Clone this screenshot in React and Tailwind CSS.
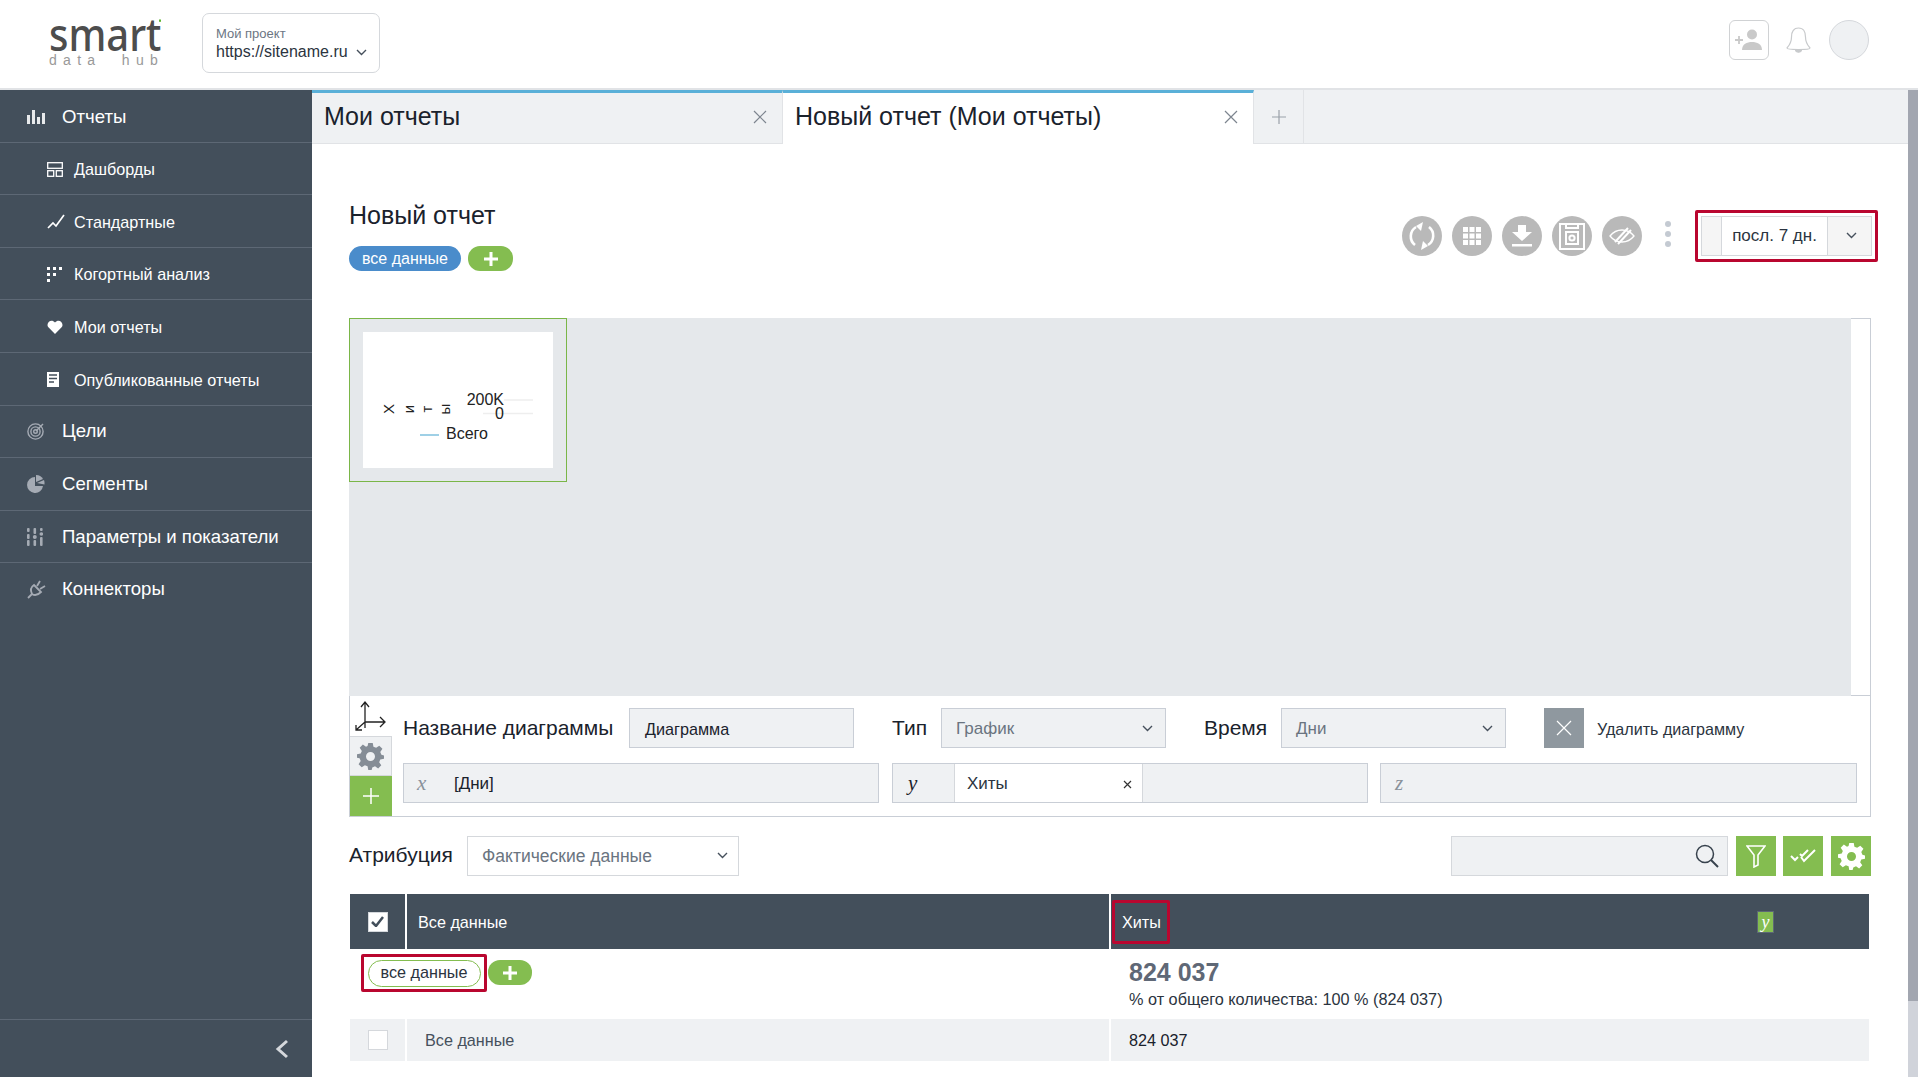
import React from "react";

const Chev = ({ className = "", color = "#46505c", w = 11 }) => (
  <svg width={w} height={w * 0.64} viewBox="0 0 11 7" className={className} fill="none" stroke={color} strokeWidth="1.4"><path d="M1 1l4.5 4.5L10 1" /></svg>
);

const I = {
  bars: <svg width="18" height="14" viewBox="0 0 18 14" fill="#e8eaec"><rect x="0" y="5" width="3" height="9"/><rect x="5" y="0" width="3" height="14"/><rect x="10" y="7" width="3" height="7"/><rect x="15" y="3" width="3" height="11"/></svg>,
  dash: <svg width="16" height="15" viewBox="0 0 16 15" fill="none" stroke="#fff" strokeWidth="1.3"><rect x=".7" y=".7" width="14.6" height="5.6"/><rect x=".7" y="8.7" width="6" height="5.6"/><rect x="9.3" y="8.7" width="6" height="5.6"/></svg>,
  line: <svg width="18" height="15" viewBox="0 0 18 15" fill="none" stroke="#fff" strokeWidth="1.7"><path d="M1 14l5-5 3 3 8-11"/></svg>,
  cohort: <svg width="15" height="15" viewBox="0 0 15 15" fill="#fff"><rect x="0" y="0" width="3" height="3"/><rect x="6" y="0" width="3" height="3"/><rect x="12" y="0" width="3" height="3"/><rect x="0" y="6" width="3" height="3"/><rect x="6" y="6" width="3" height="3"/><rect x="0" y="12" width="3" height="3"/></svg>,
  heart: <svg width="16" height="14" viewBox="0 0 16 14" fill="#fff"><path d="M8 14L1.4 7.3C-1.7 3.8 3.8-2.4 8 2.4 12.2-2.4 17.7 3.8 14.6 7.3z"/></svg>,
  doc: <svg width="12" height="15" viewBox="0 0 12 15"><rect width="12" height="15" fill="#fff"/><path d="M2 3h8M2 6.5h8M2 10h5" stroke="#434f5b" strokeWidth="1.5"/></svg>,
  target: <svg width="18" height="18" viewBox="0 0 18 18" fill="none" stroke="#a5abb4" strokeWidth="1.4"><circle cx="8.5" cy="9.5" r="7.6"/><circle cx="8.5" cy="9.5" r="4.6"/><circle cx="8.5" cy="9.5" r="1.8"/><path d="M9 9l7-7"/></svg>,
  pie: <svg width="18" height="18" viewBox="0 0 18 18" fill="#a5abb4"><path d="M8 2a8 8 0 1 0 8 9H8z"/><path d="M9 0a8 8 0 0 1 7 4L9 7z"/><path d="M10 8l7-3a8 8 0 0 1 .5 4.5z"/></svg>,
  sliders: <svg width="16" height="18" viewBox="0 0 16 18" fill="#a5abb4"><rect x="0" y="0" width="2.6" height="4" rx="1"/><rect x="0" y="6" width="2.6" height="5" rx="1"/><rect x="0" y="12" width="2.6" height="6" rx="1"/><rect x="6.5" y="0" width="2.6" height="6" rx="1"/><circle cx="7.8" cy="9" r="2"/><rect x="6.5" y="12" width="2.6" height="6" rx="1"/><rect x="13" y="0" width="2.6" height="3" rx="1"/><circle cx="14.3" cy="6" r="1.8"/><rect x="13" y="9" width="2.6" height="9" rx="1"/></svg>,
  plug: <svg width="20" height="20" viewBox="0 0 20 20" fill="none" stroke="#a5abb4" strokeWidth="1.8"><path d="M1 19l4-4"/><path d="M5 15C3 11 4 8 7 6l7 7c-3 3-6 4-9 2z"/><path d="M10 7l3-5M13 10l5-3"/></svg>,
};

const NavItem = ({ icon, text, sub, low }) => (
  <div className={"flex h-[52.6px] shrink-0 items-center border-b border-[#5d6875] text-white " + (low ? "pt-0 " : "pt-[2px] ") + (sub ? "text-[16.2px]" : "text-[18.6px]")}>
    <div className={sub ? "ml-[47px] flex w-[27px] items-center" : "ml-[27px] flex w-[35px] items-center"}>{icon}</div>
    <span>{text}</span>
  </div>
);

const Sidebar = () => (
  <aside className="flex h-full w-[312px] shrink-0 flex-col bg-[#434f5b]">
    <NavItem icon={I.bars} text="Отчеты" />
    <NavItem sub icon={I.dash} text="Дашборды" />
    <NavItem sub icon={I.line} text="Стандартные" />
    <NavItem sub icon={I.cohort} text="Когортный анализ" />
    <NavItem sub icon={I.heart} text="Мои отчеты" />
    <NavItem sub icon={I.doc} text="Опубликованные отчеты" />
    <NavItem low icon={I.target} text="Цели" />
    <NavItem low icon={I.pie} text="Сегменты" />
    <NavItem low icon={I.sliders} text="Параметры и показатели" />
    <div className="flex h-[52.6px] shrink-0 items-center pb-[2px] text-[18.6px] text-white">
      <div className="ml-[27px] flex w-[35px] items-center">{I.plug}</div>
      <span>Коннекторы</span>
    </div>
    <div className="mt-auto flex h-[58px] items-center justify-end border-t border-[#5d6875] pr-[23px]">
      <svg width="14" height="20" viewBox="0 0 14 20" fill="none" stroke="#d5d8dc" strokeWidth="3"><path d="M12 2l-9 8 9 8" /></svg>
    </div>
  </aside>
);

const Header = () => (
  <header className="flex h-[90px] shrink-0 items-start border-b-2 border-[#e1e3e6] bg-white">
    <div className="ml-[49px] mt-[18px] flex w-[115px] flex-col">
      <div className="relative h-[36px] origin-bottom scale-y-[1.15] text-[40px] font-medium leading-[36px] text-[#4d4d4d] [font-family:'Noto_Sans',sans-serif]">
        smart
        <span className="absolute left-[110px] top-[6px] h-[2px] w-[2px] bg-[#5cb531]" />
      </div>
      <div className="-mt-px whitespace-pre text-[14px] leading-[14px] tracking-[6.3px] text-[#999]">data  hub</div>
    </div>
    <div className="ml-[38px] mt-[13px] flex h-[60px] w-[178px] flex-col rounded-[7px] border border-[#d5d8dc] pl-[13px] pt-[12px]">
      <div className="text-[13px] leading-[16px] text-[#6c7683]">Мой проект</div>
      <div className="flex items-center text-[16px] leading-[20px] text-[#2b3440]">
        https://sitename.ru<Chev className="ml-[8px] mt-[2px]" w={11} />
      </div>
    </div>
    <div className="ml-auto mr-[49px] mt-[20px] flex items-start">
      <div className="flex h-[40px] w-[40px] items-center justify-center rounded-[6px] border border-[#d0d2d4]">
        <svg width="30" height="22" viewBox="0 0 30 22" fill="#c9c9c9"><path d="M1 11h8M5 7v8" stroke="#c9c9c9" strokeWidth="1.8"/><circle cx="18" cy="5.500" r="5"/><path d="M8 21c0-6 5-8 10-8s10 2 10 8z"/></svg>
      </div>
      <svg className="ml-[17px] mt-[7px]" width="25" height="28" viewBox="0 0 25 28" fill="none" stroke="#c8cacc" strokeWidth="1.2"><path d="M12.500 1c-5 0-7 4-7 9 0 6-2 8-4.500 11 0 1 3 1.500 11.500 1.500S24 22 24 21c-2.500-3-4.500-5-4.500-11 0-5-2-9-7-9z"/><path d="M9.500 23c.5 3 5.500 3 6 0" fill="#c8cacc"/></svg>
      <div className="ml-[18px] h-[40px] w-[40px] rounded-full border border-[#d5d8dc] bg-[#eff1f3]" />
    </div>
  </header>
);

const Tab = ({ text, active }) => (
  <div className={"flex h-full w-[471px] items-center border-r border-[#e1e3e6] border-t-[3px] border-t-[#5ab0d8] pb-[3px] pl-[12px] pr-[15px] text-[25px] text-[#1a222c] " + (active ? "bg-white" : "border-b border-b-[#e1e3e6] bg-[#eff1f3]")}>
    <span className="flex-1">{text}</span>
    <svg width="14" height="14" viewBox="0 0 14 14" stroke="#7d858f" strokeWidth="1.2"><path d="M1 1l12 12M13 1L1 13" /></svg>
  </div>
);

const Tabs = () => (
  <div className="flex h-[54px] shrink-0 bg-[#eff1f3]">
    <Tab text="Мои отчеты" />
    <Tab text="Новый отчет (Мои отчеты)" active />
    <div className="flex h-full w-[50px] items-center justify-center border-b border-r border-[#e1e3e6]">
      <svg width="16" height="16" viewBox="0 0 16 16" stroke="#9aa1a9" strokeWidth="1.2"><path d="M8 1v14M1 8h14" /></svg>
    </div>
    <div className="flex-1 border-b border-[#e1e3e6]" />
  </div>
);

const Circle = ({ children }) => (
  <div className="flex h-[40px] w-[40px] items-center justify-center rounded-full bg-[#b9b9b9]">{children}</div>
);

const Toolbar = () => (
  <div className="-mr-[7px] mt-[11px] flex items-start">
    <div className="mt-[6px] flex gap-[10px]">
      <Circle>
        <svg width="28" height="32" viewBox="0 0 28 32" fill="none" stroke="#fff" strokeWidth="2.600"><path d="M8 7a11 11 0 0 0-1 18"/><path d="M20 25a11 11 0 0 0 1-18"/><path d="M15 2l-7 4 5 5z" fill="#fff" stroke="none"/><path d="M13 30l7-4-5-5z" fill="#fff" stroke="none"/></svg>
      </Circle>
      <Circle>
        <svg width="18" height="18" viewBox="0 0 18 18" fill="#fff"><rect width="5" height="5"/><rect x="6.500" width="5" height="5"/><rect x="13" width="5" height="5"/><rect y="6.500" width="5" height="5"/><rect x="6.500" y="6.500" width="5" height="5"/><rect x="13" y="6.500" width="5" height="5"/><rect y="13" width="5" height="5"/><rect x="6.500" y="13" width="5" height="5"/><rect x="13" y="13" width="5" height="5"/></svg>
      </Circle>
      <Circle>
        <svg width="20" height="22" viewBox="0 0 20 22" fill="#fff"><path d="M6 0h8v7h6l-10 9L0 7h6z"/><rect y="19" width="20" height="2.500"/></svg>
      </Circle>
      <Circle>
        <svg width="26" height="27" viewBox="0 0 26 27" fill="none" stroke="#fff" strokeWidth="2"><path d="M1 1h24v25H1z"/><path d="M7 1v4h12V1"/><rect x="7" y="9" width="12" height="12"/><circle cx="13" cy="15" r="2.600"/></svg>
      </Circle>
      <Circle>
        <svg width="26" height="20" viewBox="0 0 26 20" fill="none" stroke="#fff" strokeWidth="1.300"><path d="M1 10c4-5 8-6 12-6s8 1 12 6c-4 5-8 6-12 6S5 15 1 10z"/><path d="M6 16L19 2M9 18L22 4" strokeWidth="2"/></svg>
      </Circle>
    </div>
    <div className="ml-[23px] mr-[24px] mt-[11px] flex flex-col gap-[4px]">
      <span className="h-[6px] w-[6px] rounded-full bg-[#c4cad2]" />
      <span className="h-[6px] w-[6px] rounded-full bg-[#c4cad2]" />
      <span className="h-[6px] w-[6px] rounded-full bg-[#c4cad2]" />
    </div>
    <div className="rounded-[2px] border-[3px] border-[#b9062f] p-[3px]">
      <div className="flex h-[40px] w-[171px] border border-[#d5d8dc]">
        <div className="w-[20px] border-r border-[#d5d8dc] bg-[#f5f5f5]" />
        <div className="flex w-[105px] items-center justify-center text-[17px] text-[#2b3440]">посл. 7 дн.</div>
        <div className="flex flex-1 items-center justify-center border-l border-[#d5d8dc] bg-[#f5f5f5]"><Chev className="ml-[3px]" w={11} /></div>
      </div>
    </div>
  </div>
);

const Thumb = () => (
  <div className="h-[164px] w-[218px] border border-[#7ab648] p-[13px]">
    <svg width="190" height="136" viewBox="0 0 190 136" className="bg-white [font-family:'Liberation_Sans',sans-serif]">
      <path d="M141 68h29M120 81.500h50" stroke="#eee" strokeWidth="1.500" />
      <g fontSize="15" fill="#222">
        <text transform="translate(31 77) rotate(-90)" textAnchor="middle">Х</text>
        <text transform="translate(51 77) rotate(-90)" textAnchor="middle">и</text>
        <text transform="translate(69 77) rotate(-90)" textAnchor="middle">т</text>
        <text transform="translate(87 77) rotate(-90)" textAnchor="middle">ы</text>
      </g>
      <text x="141" y="73" textAnchor="end" fontSize="16" fill="#222">200K</text>
      <text x="141" y="87" textAnchor="end" fontSize="16" fill="#222">0</text>
      <path d="M57 103h19" stroke="#9fd0e6" strokeWidth="2" />
      <text x="83" y="107" fontSize="16" fill="#222">Всего</text>
    </svg>
  </div>
);

const Field = ({ children, className = "" }) => (
  <div className={"flex h-[40px] items-center border border-[#c9ced6] bg-[#eff1f3] " + className}>{children}</div>
);

const Math2 = ({ children, className = "" }) => (
  <span className={"text-[21px] italic leading-none [font-family:'Liberation_Serif',serif] " + className}>{children}</span>
);

const Gear = ({ size, color }) => (
  <svg width={size} height={size} viewBox="0 0 24 24" fill={color}>
    <path fillRule="evenodd" d="M10 0h4l.6 3.300 2.400 1 2.800-1.900 2.800 2.800-1.900 2.800 1 2.400L24 11v3l-3.300.6-1 2.400 1.900 2.800-2.800 2.800-2.800-1.900-2.400 1L13 24h-3l-.6-3.300-2.400-1-2.800 1.900-2.800-2.800 1.900-2.800-1-2.400L0 13v-3l3.300-.6 1-2.400L2.400 4.200l2.800-2.800L8 3.300l1.400-.6zM12 8a4 4 0 1 0 0 8 4 4 0 0 0 0-8z" />
  </svg>
);

const ChartPanel = () => (
  <div className="mt-[52px] w-[1522px] border border-[#c9ced6]">
    <div className="flex h-[377px] border-b border-[#c9ced6] bg-white">
      <div className="-ml-px -mt-px h-[378px] w-[1502px] bg-[#e5e8eb]"><Thumb /></div>
    </div>
    <div className="flex h-[120px]">
      <div className="flex w-[42px] shrink-0 flex-col">
        <div className="flex h-[40px] items-center justify-center pr-[2px]">
          <svg width="32" height="32" viewBox="0 0 32 32" fill="none" stroke="#222" strokeWidth="1.300"><path d="M11 28V3M7 7l4-5 4 5M11 22h19M26 17l5 5-5 5M11 22L2 30M2 25v5h6"/></svg>
        </div>
        <div className="flex h-[40px] items-center justify-center border border-l-0 border-[#d5d8dc] bg-[#eff1f3]"><Gear size={27} color="#858d96" /></div>
        <div className="flex h-[40px] items-center justify-center bg-[#84bd50]">
          <svg width="18" height="18" viewBox="0 0 18 18" stroke="#fff" strokeWidth="1.500"><path d="M9 1v16M1 9h16" /></svg>
        </div>
      </div>
      <div className="flex flex-1 flex-col pl-[11px] pt-[12px]">
        <div className="flex h-[40px] items-center">
          <div className="w-[226px] text-[21px] text-[#1a222c]">Название диаграммы</div>
          <Field className="w-[225px] pl-[15px] pt-[2px] text-[16.2px] text-[#1a222c]">Диаграмма</Field>
          <div className="ml-[38px] w-[49px] text-[21px] text-[#1a222c]">Тип</div>
          <Field className="w-[225px] justify-between pl-[14px] pr-[12px] pt-[2px] text-[17px] text-[#6a7480]">График<Chev /></Field>
          <div className="ml-[38px] w-[77px] text-[21px] text-[#1a222c]">Время</div>
          <Field className="w-[225px] justify-between pl-[14px] pr-[12px] pt-[2px] text-[17px] text-[#6a7480]">Дни<Chev /></Field>
          <div className="ml-[38px] flex h-[40px] w-[40px] items-center justify-center bg-[#8f989f]">
            <svg width="18" height="18" viewBox="0 0 18 18" stroke="#fff" strokeWidth="1.200"><path d="M2 2l14 14M16 2L2 16" /></svg>
          </div>
          <div className="ml-[13px] pt-[2px] text-[16.100px] text-[#2b3440]">Удалить диаграмму</div>
        </div>
        <div className="mt-[15px] flex h-[40px]">
          <Field className="w-[476px] text-[17px]">
            <Math2 className="ml-[13px] w-[37px] text-[#8a929b]">x</Math2>
            <span className="pt-[2px] text-[#1a222c]">[Дни]</span>
          </Field>
          <Field className="ml-[13px] w-[476px] text-[17px]">
            <Math2 className="w-[61px] pl-[15px] text-[#1a222c]">y</Math2>
            <div className="flex h-full w-[189px] items-center justify-between border-x border-[#d5d8dc] bg-white pl-[12px] pr-[10px] pt-[2px] text-[#2b3440]">
              Хиты
              <svg width="9" height="9" viewBox="0 0 9 9" stroke="#333" strokeWidth="1.200"><path d="M1 1l7 7M8 1L1 8" /></svg>
            </div>
          </Field>
          <Field className="ml-[12px] w-[477px]">
            <Math2 className="ml-[14px] text-[#8a929b]">z</Math2>
          </Field>
        </div>
      </div>
    </div>
  </div>
);

const GreenBtn = ({ children, className = "" }) => (
  <div className={"flex h-[40px] w-[40px] items-center justify-center bg-[#84bd50] " + className}>{children}</div>
);

const Attribution = () => (
  <div className="mt-[19px] flex h-[40px] items-center">
    <div className="w-[118px] pb-[2px] text-[21px] text-[#1a222c]">Атрибуция</div>
    <div className="flex h-[40px] w-[272px] items-center justify-between border border-[#d5d8dc] pl-[14px] pr-[10px] text-[17.500px] text-[#6a7480]">Фактические данные<Chev /></div>
    <div className="ml-auto flex h-[40px] w-[277px] items-center justify-end border border-[#d5d8dc] bg-[#eff1f3] pr-[8px]">
      <svg width="24" height="24" viewBox="0 0 24 24" fill="none" stroke="#37424d" strokeWidth="1.500"><circle cx="10" cy="10" r="8.500"/><path d="M16 16l7 7" strokeWidth="2"/></svg>
    </div>
    <GreenBtn className="ml-[8px]">
      <svg width="20" height="23" viewBox="0 0 20 23" fill="none" stroke="#fff" strokeWidth="1.600"><path d="M1 1h18l-7 9v10l-4 2V10z"/></svg>
    </GreenBtn>
    <GreenBtn className="ml-[7px]">
      <svg width="26" height="14" viewBox="0 0 26 14" fill="none" stroke="#fff" strokeWidth="2"><path d="M1 7l4 4 3-3M11 8l3 4L25 1M10 5l2 2 6-6"/></svg>
    </GreenBtn>
    <GreenBtn className="ml-[8px]"><Gear size={27} color="#fff" /></GreenBtn>
  </div>
);

const Table = () => (
  <div className="ml-px mt-[18px] w-[1519px]">
    <div className="flex h-[55px] bg-[#434f5b] text-[16.2px] text-white">
      <div className="flex w-[55px] items-center justify-center">
        <div className="flex h-[20px] w-[20px] items-center justify-center border border-[#d5d8dc] bg-white">
          <svg width="13" height="11" viewBox="0 0 13 11" fill="none" stroke="#434f5b" strokeWidth="2.500"><path d="M1 6l4 4 7-9" /></svg>
        </div>
      </div>
      <div className="flex w-[706px] items-center border-x-2 border-white pl-[11px] pt-[2px]">Все данные</div>
      <div className="flex flex-1 items-center">
        <div className="ml-px flex h-[44px] w-[58px] items-center rounded-[2px] border-[3px] border-[#b9062f] pl-[7px] pt-[2px]">Хиты</div>
        <div className="ml-[587px] flex h-[22px] w-[17px] items-center justify-center border border-[#5d6875] bg-[#84bd50]">
          <span className="text-[18px] italic leading-none [font-family:'Liberation_Serif',serif]">y</span>
        </div>
      </div>
    </div>
    <div className="flex h-[70px]">
      <div className="flex w-[761px] items-start pl-[11px] pt-[5px]">
        <div className="flex h-[38px] w-[126px] items-center justify-center rounded-[2px] border-[3px] border-[#b9062f]">
          <div className="flex h-[27px] w-[113px] items-center justify-center rounded-full border border-[#84bd50] pb-[2px] text-[16.2px] text-[#2b3440]">все данные</div>
        </div>
        <div className="ml-px mt-[6px] flex h-[25px] w-[44px] items-center justify-center rounded-[12px] bg-[#84bd50]">
          <svg width="14" height="14" viewBox="0 0 14 14" stroke="#fff" strokeWidth="3"><path d="M7 0v14M0 7h14" /></svg>
        </div>
      </div>
      <div className="pl-[18px] pt-[9px]">
        <div className="text-[25px] font-bold leading-[28px] text-[#5f6876]">824 037</div>
        <div className="mt-[3px] text-[16.250px] leading-[20px] text-[#2b3440]">% от общего количества: 100 % (824 037)</div>
      </div>
    </div>
    <div className="flex h-[42px] bg-[#eff1f3] text-[16.2px]">
      <div className="flex w-[55px] items-center justify-center">
        <div className="h-[20px] w-[20px] border border-[#d5d8dc] bg-white" />
      </div>
      <div className="flex w-[706px] items-center border-x-2 border-white pl-[18px] text-[#46505c]">Все данные</div>
      <div className="flex items-center pl-[18px] text-[#1a222c]">824 037</div>
    </div>
  </div>
);

export default function App() {
  return (
    <div className="flex h-[1077px] w-[1918px] flex-col overflow-hidden bg-white [font-family:'Liberation_Sans',sans-serif]">
      <Header />
      <div className="flex h-[987px]">
        <Sidebar />
        <main className="flex min-w-0 flex-1 flex-col">
          <Tabs />
          <div className="px-[37px]">
            <div className="flex h-[122px] items-start justify-between pt-[55px]">
              <div>
                <div className="text-[25px] leading-[32px] text-[#1a222c]">Новый отчет</div>
                <div className="mt-[15px] flex gap-[7px]">
                  <div className="flex h-[25px] w-[112px] items-center justify-center rounded-full bg-[#4a8ccb] text-[16px] text-white">все данные</div>
                  <div className="flex h-[25px] w-[45px] items-center justify-center rounded-[12px] bg-[#84bd50]">
                    <svg width="14" height="14" viewBox="0 0 14 14" stroke="#fff" strokeWidth="3"><path d="M7 0v14M0 7h14" /></svg>
                  </div>
                </div>
              </div>
              <Toolbar />
            </div>
            <ChartPanel />
            <Attribution />
            <Table />
          </div>
        </main>
        <div className="flex w-[10px] shrink-0 flex-col bg-[#d0d3da]">
          <div className="h-[911px] bg-[#a2a6b0]" />
        </div>
      </div>
    </div>
  );
}
